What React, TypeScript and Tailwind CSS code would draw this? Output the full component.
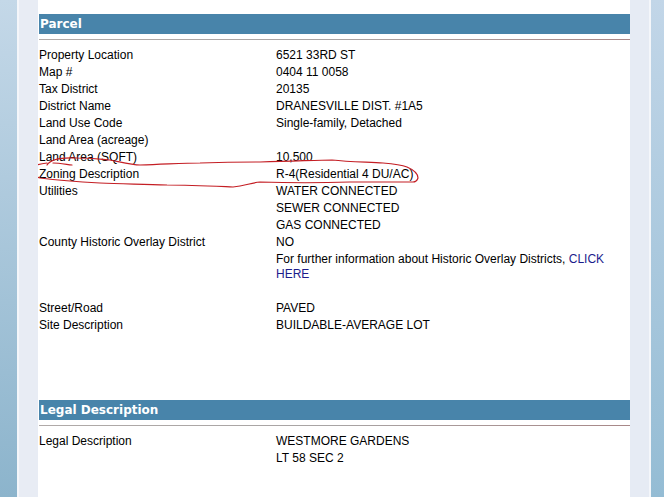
import React from "react";

type Row = { label: string; value: React.ReactNode };

const parcel: (Row | null)[] = [
  { label: "Property Location", value: "6521 33RD ST" },
  { label: "Map #", value: "0404 11 0058" },
  { label: "Tax District", value: "20135" },
  { label: "District Name", value: "DRANESVILLE DIST. #1A5" },
  { label: "Land Use Code", value: "Single-family, Detached" },
  { label: "Land Area (acreage)", value: "" },
  { label: "Land Area (SQFT)", value: "10,500" },
  { label: "Zoning Description", value: "R-4(Residential 4 DU/AC)" },
  { label: "Utilities", value: "WATER CONNECTED" },
  { label: "", value: "SEWER CONNECTED" },
  { label: "", value: "GAS CONNECTED" },
  { label: "County Historic Overlay District", value: "NO" },
  {
    label: "",
    value: (
      <>
        For further information about Historic Overlay Districts,{" "}
        <span className="text-[#1c1c8c]">CLICK HERE</span>
      </>
    ),
  },
  null,
  { label: "Street/Road", value: "PAVED" },
  { label: "Site Description", value: "BUILDABLE-AVERAGE LOT" },
];

const legal: Row[] = [
  { label: "Legal Description", value: "WESTMORE GARDENS" },
  { label: "", value: "LT 58 SEC 2" },
];

function Rows({ rows }: { rows: (Row | null)[] }) {
  return (
    <div className="flex flex-col">
      {rows.map((r, i) =>
        r === null ? (
          <div key={i} className="h-[17px]" />
        ) : (
          <div key={i} className="flex py-px leading-[15px]">
            <div className="w-[237px] shrink-0">{r.label}</div>
            <div className="w-[345px]">{r.value}</div>
          </div>
        )
      )}
    </div>
  );
}

function Header({ title }: { title: string }) {
  return (
    <div>
      <div className="h-[20px] bg-[#4884aa] text-white font-bold text-[12px] leading-[20px] pl-px font-['DejaVu_Sans',sans-serif]">
        {title}
      </div>
      <div className="h-[5px]" />
      <div className="h-px bg-gradient-to-r from-[#b0aaa8] via-[#a8a4a4] to-[#a88888]" />
    </div>
  );
}

export default function App() {
  return (
    <div className="w-[664px] h-[497px] flex overflow-hidden bg-white font-['Liberation_Sans',Arial,sans-serif] text-[12px] text-black">
      <div className="w-[17px] shrink-0 bg-gradient-to-b from-[#c4d8e8] to-[#8cb4cc]" />
      <div className="w-[2px] shrink-0 bg-[#f4f6fa]" />
      <div className="w-[19px] shrink-0 bg-[#e8ecf4]" />
      <div className="relative w-[592px] shrink-0 bg-white pt-[14px] pl-px">
        <Header title="Parcel" />
        <div className="pt-[7px]">
          <Rows rows={parcel} />
        </div>
        <div className="h-[66px]" />
        <Header title="Legal Description" />
        <div className="pt-[7px]">
          <Rows rows={legal} />
        </div>
        <svg
          className="absolute left-0 top-0 pointer-events-none"
          width="592"
          height="497"
          viewBox="38 0 592 497"
        >
          <path
            d="M72 165 C64 164 58 163 53 163 M47 165 C50 160 60 157 77 158 C95 158 105 160 110 160 C125 163 133 165 140 165 C170 164 185 163 200 163 C230 162 245 162 260 162 C300 161 320 160 332 160 C350 162 370 162 383 163 C396 164 402 165 407 167 C414 170 418 174 418 178 C417 181 415 182 413 182 C395 182 370 182 350 182 C320 183 290 183 260 182 C250 183 245 186 233 187 C210 186 190 185 167 185 C140 184 120 184 100 183 C80 182 55 180 40 178 C32 176 26 172 27 170 C30 167 38 164 47 163"
            fill="none"
            stroke="#c41e24"
            strokeWidth="1.2"
            strokeLinecap="round"
          />
        </svg>
      </div>
      <div className="w-[19px] shrink-0 bg-[#e6ebf4]" />
      <div className="w-[2px] shrink-0 bg-[#f4f6fa]" />
      <div className="flex-1 bg-gradient-to-b from-[#c2d6e8] to-[#94bcd4]" />
    </div>
  );
}
